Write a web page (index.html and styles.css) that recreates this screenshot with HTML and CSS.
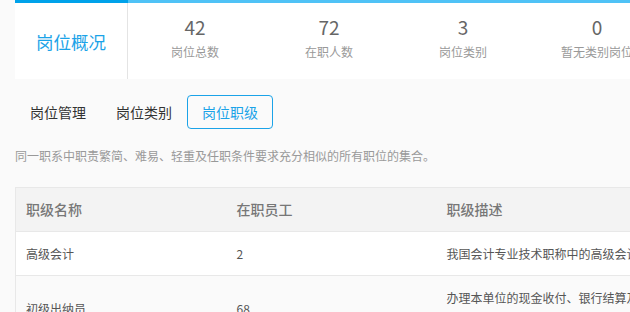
FILE: index.html
```html
<!DOCTYPE html>
<html lang="zh">
<head>
<meta charset="utf-8">
<link rel="stylesheet" href="styles.css">
</head>
<body>
<div class="page">
  <section class="overview">
    <div class="ov-title">岗位概况</div>
    <div class="ov-stat"><div class="num">42</div><div class="lbl">岗位总数</div></div>
    <div class="ov-stat"><div class="num">72</div><div class="lbl">在职人数</div></div>
    <div class="ov-stat"><div class="num">3</div><div class="lbl">岗位类别</div></div>
    <div class="ov-stat"><div class="num">0</div><div class="lbl">暂无类别岗位</div></div>
  </section>

  <nav class="tabs">
    <span class="tab">岗位管理</span>
    <span class="tab">岗位类别</span>
    <span class="tab active">岗位职级</span>
  </nav>

  <p class="desc">同一职系中职责繁简、难易、轻重及任职条件要求充分相似的所有职位的集合。</p>

  <table class="grid">
    <colgroup>
      <col class="c1"><col class="c2"><col class="c3">
    </colgroup>
    <thead>
      <tr><th>职级名称</th><th>在职员工</th><th>职级描述</th></tr>
    </thead>
    <tbody>
      <tr><td>高级会计</td><td>2</td><td>我国会计专业技术职称中的高级会计师职称</td></tr>
      <tr class="alt"><td>初级出纳员</td><td>68</td><td>办理本单位的现金收付、银行结算及有关账务，<br>保管库存现金、有价证券及财务印章</td></tr>
    </tbody>
  </table>
</div>
</body>
</html>
```

FILE: styles.css
```css
html, body {
  margin: 0;
  padding: 0;
  overflow: hidden;
  background: #fafafa;
}
body {
  font-family: "Noto Sans CJK SC", "Microsoft YaHei", sans-serif;
  color: #333;
}
.page {
  width: 860px;
  padding-left: 15px;
}
.overview {
  display: flex;
  background: #fff;
  border-top: 3px solid #4fc2f6;
  height: 76px;
}
.ov-title {
  width: 112px;
  flex: none;
  display: flex;
  align-items: center;
  justify-content: center;
  font-size: 17.5px;
  color: #1ba3e8;
  border-right: 1px solid #e4e4e4;
  box-shadow: 0 -3px 0 #00a2ea;
}
.ov-stat {
  width: 134px;
  flex: none;
  text-align: center;
}
.ov-stat .num {
  font-size: 19px;
  color: #666;
  line-height: 24px;
  margin-top: 12px;
}
.ov-stat .lbl {
  font-size: 12px;
  color: #999;
  line-height: 18px;
  margin-top: 4px;
  white-space: nowrap;
}
.tabs {
  display: flex;
  margin-top: 16px;
}
.tab {
  height: 32px;
  line-height: 32px;
  padding: 0 14px;
  border: 1px solid transparent;
  border-radius: 4px;
  font-size: 14px;
  color: #333;
}
.tab.active {
  border-color: #1ba3e8;
  color: #1ba3e8;
}
.desc {
  margin: 17px 0 0;
  font-size: 12px;
  line-height: 20px;
  color: #999;
}
.grid {
  margin-top: 21px;
  border-collapse: collapse;
  width: 845px;
  table-layout: fixed;
  border: 1px solid #e8e8e8;
}
.c1 { width: 211px; }
.c2 { width: 210px; }
.grid th, .grid td {
  text-align: left;
  padding: 11px 10px;
  line-height: 21px;
  border-bottom: 1px solid #e8e8e8;
  white-space: nowrap;
  vertical-align: middle;
}
.grid th {
  background: #f3f3f3;
  font-size: 14px;
  font-weight: 500;
  color: #777;
}
.grid td {
  background: #fff;
  font-size: 12px;
  color: #555;
}
.grid tr.alt td {
  background: #fafafa;
}
```
